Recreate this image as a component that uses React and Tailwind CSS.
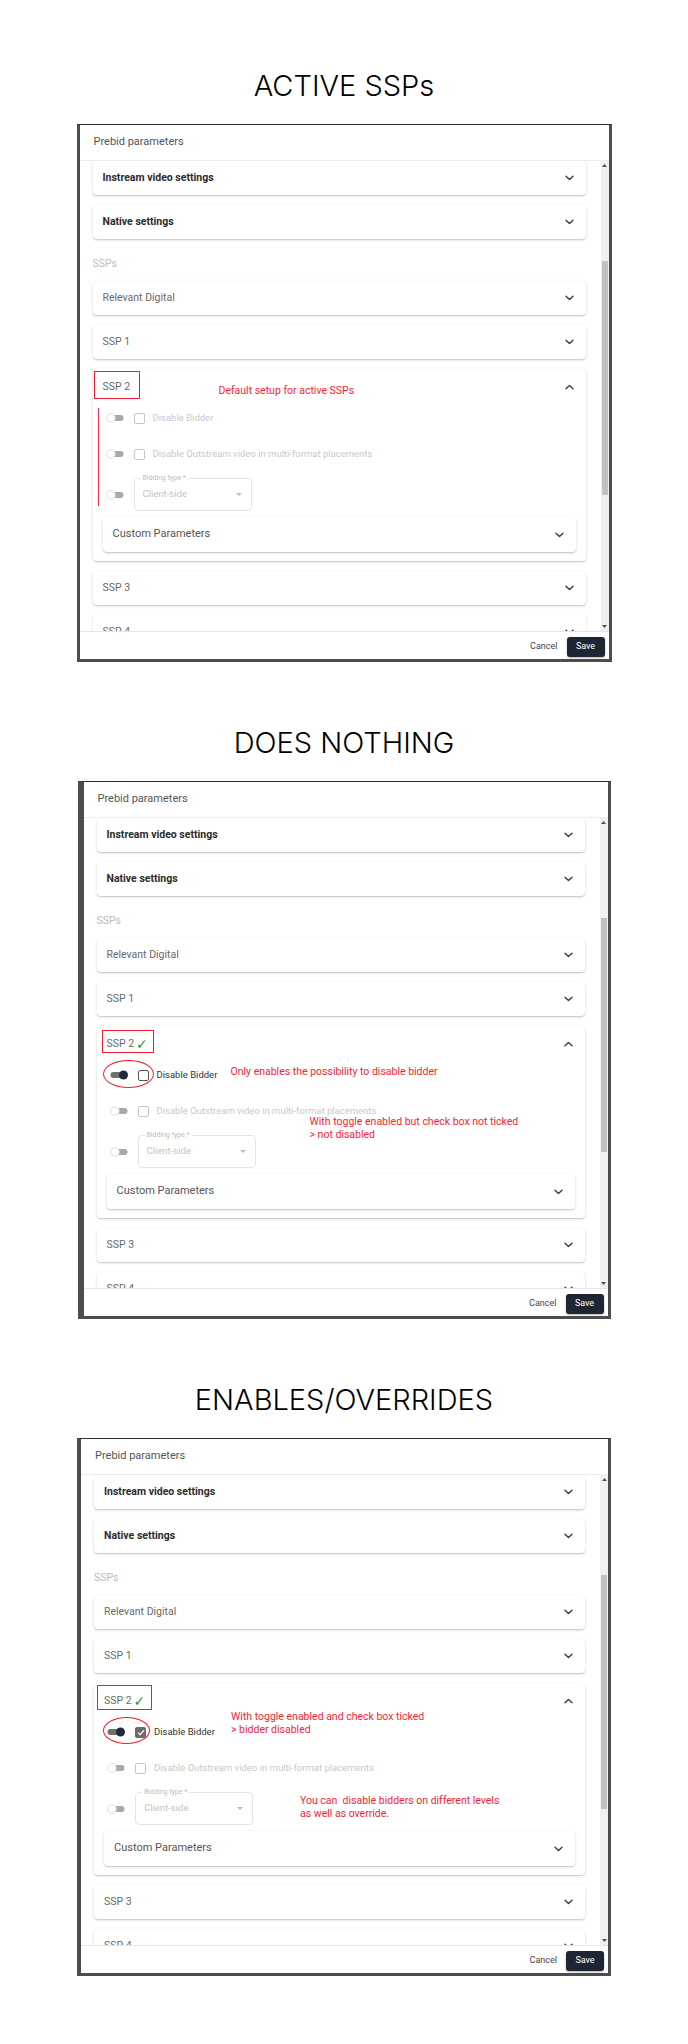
import React from "react";

// small drawings used inside the dialog
function Chevron({ up = false }) {
  return (
    <svg width="9" height="6" viewBox="0 0 9 6" className={up ? "rotate-180" : ""}>
      <path d="M1 1.2l3.5 3.4L8 1.2" fill="none" stroke="#3c3c3c" strokeWidth="1.4" strokeLinecap="round" strokeLinejoin="round" />
    </svg>
  );
}

function Toggle({ on }) {
  if (on) {
    return (
      <svg width="19" height="10" viewBox="0 0 19 10">
        <rect x="0.5" y="2" width="13" height="6" rx="3" fill="#6e6e6e" />
        <circle cx="13.5" cy="5" r="4.5" fill="#1f2a3a" />
      </svg>
    );
  }
  return (
    <svg width="19" height="10" viewBox="0 0 19 10">
      <rect x="4" y="2" width="13.5" height="6" rx="3" fill="#a9a9a9" />
      <circle cx="5" cy="5" r="4.3" fill="#fff" stroke="#d4d4d4" strokeWidth="0.8" />
    </svg>
  );
}

function Checkbox({ state }) {
  if (state === "checked") {
    return (
      <div className="w-[11px] h-[11px] rounded-[2px] bg-[#6b6b6b] flex items-center justify-center">
        <svg width="8" height="7" viewBox="0 0 8 7">
          <path d="M1 3.6l2 2L7 1.2" fill="none" stroke="#fff" strokeWidth="1.3" />
        </svg>
      </div>
    );
  }
  if (state === "empty") {
    return <div className="w-[11px] h-[11px] rounded-[2px] border-[1.4px] border-[#555]" />;
  }
  return <div className="w-[11px] h-[11px] rounded-[2px] border-[1.3px] border-[#c6c6c6]" />;
}

function Card({ className = "", children }) {
  return (
    <div className={`bg-white rounded-[4px] shadow-[0_1px_3px_rgba(0,0,0,0.16),0_1px_1px_rgba(0,0,0,0.1)] ${className}`}>
      {children}
    </div>
  );
}

function Collapsed({ title, bold = false }) {
  return (
    <Card className="h-[34px] shrink-0 flex items-center justify-between pl-[10px] pr-[12px]">
      <span className={bold ? "text-[10.5px] font-bold text-[#2b2b2b]" : "text-[10.5px] text-[#6a6a6a]"}>{title}</span>
      <Chevron />
    </Card>
  );
}

function SettingRow({ toggleOn, box, label, active, className = "" }) {
  return (
    <div className={`h-[26px] flex items-center ${className}`}>
      <div className="w-[28px]">
        <Toggle on={toggleOn} />
      </div>
      <Checkbox state={box} />
      <span className={active ? "ml-[8px] text-[9.5px] text-[#333]" : "ml-[8px] text-[9.5px] text-[#c9c9c9]"}>{label}</span>
    </div>
  );
}

function Ssp2({ variant }) {
  const on = variant > 0;
  return (
    <Card className="relative h-[192px] shrink-0 flex flex-col">
      <div className="h-[36px] flex items-center justify-between pl-[10px] pr-[12px]">
        <div className="flex items-center gap-[2px]">
          <span className="text-[10.5px] text-[#6a6a6a]">SSP 2</span>
          {on && <span className="text-[14px] leading-[14px] font-bold text-[#1f9a3a] font-['DejaVu_Sans',sans-serif]">✓</span>}
        </div>
        <Chevron up />
      </div>

      <div className="flex flex-col pl-[13px]">
        <SettingRow
          toggleOn={on}
          box={variant === 2 ? "checked" : on ? "empty" : "disabled"}
          label="Disable Bidder"
          active={on}
        />
        <SettingRow
          className="mt-[10px]"
          toggleOn={false}
          box="disabled"
          label="Disable Outstream video in multi-format placements"
        />
        <div className="mt-[11px] h-[33px] flex items-center">
          <div className="w-[28px]">
            <Toggle on={false} />
          </div>
          <div className="relative w-[118px] h-[33px] border border-[#e4e4e4] rounded-[4px] flex items-center justify-between pl-[8px] pr-[9px]">
            <span className="absolute -top-[5px] left-[6px] px-[2px] bg-white text-[7px] leading-[9px] text-[#bdbdbd]">Bidding type *</span>
            <span className="text-[9.5px] text-[#c4c4c4]">Client-side</span>
            <svg width="6" height="3" viewBox="0 0 6 3">
              <path d="M0 0h6L3 3z" fill="#bdbdbd" />
            </svg>
          </div>
        </div>
      </div>

      <Card className="mx-[10px] mt-[6px] h-[35px] flex items-center justify-between pl-[10px] pr-[12px]">
        <span className="text-[11px] text-[#555]">Custom Parameters</span>
        <Chevron />
      </Card>

      {/* annotations drawn over the screenshot */}
      {variant === 0 && (
        <>
          <div className="absolute left-[1px] top-[2px] w-[46px] h-[28px] border-[1.5px] border-[#ee1c2e]" />
          <span className="absolute left-[126px] top-[15px] text-[10.5px] leading-[14px] text-[#f21f38] whitespace-nowrap">Default setup for active SSPs</span>
          <div className="absolute left-[5px] top-[39px] w-[1.5px] h-[98px] bg-[#f0304a]" />
        </>
      )}
      {variant === 1 && (
        <>
          <div className="absolute left-[5px] top-[4px] w-[52px] h-[23px] border-[1.5px] border-[#ee1c2e]" />
          <div className="absolute left-[6px] top-[34px] w-[51px] h-[28px] rounded-[50%] border-[1.5px] border-[#ee1c2e]" />
          <span className="absolute left-[134px] top-[39px] text-[10.5px] leading-[14px] text-[#f21f38] whitespace-nowrap">Only enables the possibility to disable bidder</span>
          <span className="absolute left-[213px] top-[90px] text-[10.5px] leading-[12.5px] text-[#f21f38] whitespace-nowrap">
            With toggle enabled but check box not ticked
            <br />
            &gt; not disabled
          </span>
        </>
      )}
      {variant === 2 && (
        <>
          <div className="absolute left-[3px] top-[2px] w-[55px] h-[25px] border-[1.5px] border-[#ee1c2e]" />
          <div className="absolute left-[9px] top-[34px] w-[47px] h-[27px] rounded-[50%] border-[1.5px] border-[#ee1c2e]" />
          <span className="absolute left-[137px] top-[28px] text-[10.5px] leading-[12.5px] text-[#f21f38] whitespace-nowrap">
            With toggle enabled and check box ticked
            <br />
            &gt; bidder disabled
          </span>
          <span className="absolute left-[206px] top-[112px] text-[10.5px] leading-[12.5px] text-[#f21f38] whitespace-pre">
            {"You can  disable bidders on different levels\nas well as override."}
          </span>
        </>
      )}
    </Card>
  );
}

function Dialog({ variant, frame }) {
  return (
    <div className={`h-[538px] border-t border-b-[3px] border-r-[3px] border-[#4d4d4d] border-t-[#2e2e2e] bg-white flex flex-col font-['Roboto',sans-serif] ${frame}`}>
      <div className="h-[36px] shrink-0 flex items-center pl-[14px] border-b border-[#ececec] text-[11px] text-[#555]">
        Prebid parameters
      </div>

      <div className="h-[470px] flex">
        <div className="flex-1 overflow-hidden pl-[13px] pr-[15px] flex flex-col gap-[10px]">
          <Collapsed title="Instream video settings" bold />
          <Collapsed title="Native settings" bold />
          <div className="h-[22px] shrink-0 flex items-end">
            <span className="text-[10.5px] leading-[14px] text-[#bdbdbd]">SSPs</span>
          </div>
          <Collapsed title="Relevant Digital" />
          <Collapsed title="SSP 1" />
          <Ssp2 variant={variant} />
          <Collapsed title="SSP 3" />
          <Collapsed title="SSP 4" />
        </div>

        {/* scrollbar */}
        <div className="w-[8px] bg-[#f1f1f1] flex flex-col items-center">
          <svg width="5" height="3" viewBox="0 0 5 3" className="mt-[3px]">
            <path d="M0 3h5L2.5 0z" fill="#505050" />
          </svg>
          <div className="mt-[94px] w-[6px] h-[234px] bg-[#c1c1c1]" />
          <svg width="5" height="3" viewBox="0 0 5 3" className="mt-auto mb-[3px]">
            <path d="M0 0h5L2.5 3z" fill="#505050" />
          </svg>
        </div>
      </div>

      <div className="h-[28px] shrink-0 border-t border-[#e6e6e6] flex items-center justify-end gap-[9px] pr-[4px] pt-[2px]">
        <span className="text-[9px] text-[#444]">Cancel</span>
        <button className="w-[38px] h-[20px] rounded-[3px] bg-[#1e2533] text-white text-[9px] shadow-[0_1px_2px_rgba(0,0,0,0.3)]">
          Save
        </button>
      </div>
    </div>
  );
}

const sections = [
  { title: "ACTIVE SSPs", frame: "w-[535px] border-l-[3px]" },
  { title: "DOES NOTHING", frame: "w-[533px] border-l-[6px]" },
  { title: "ENABLES/OVERRIDES", frame: "w-[534px] border-l-[4px]" },
];

export default function App() {
  return (
    <div className="min-h-[2044px] bg-white flex flex-col items-center pt-[68px]">
      {sections.map((s, i) => (
        <div key={s.title} className={i === 0 ? "flex flex-col items-center" : "mt-[63px] flex flex-col items-center"}>
          <h1 className="h-[36px] leading-[36px] text-[29px] text-black font-['Inter',sans-serif] font-light">
            {s.title}
          </h1>
          <div className="mt-[20px]">
            <Dialog variant={i} frame={s.frame} />
          </div>
        </div>
      ))}
    </div>
  );
}
